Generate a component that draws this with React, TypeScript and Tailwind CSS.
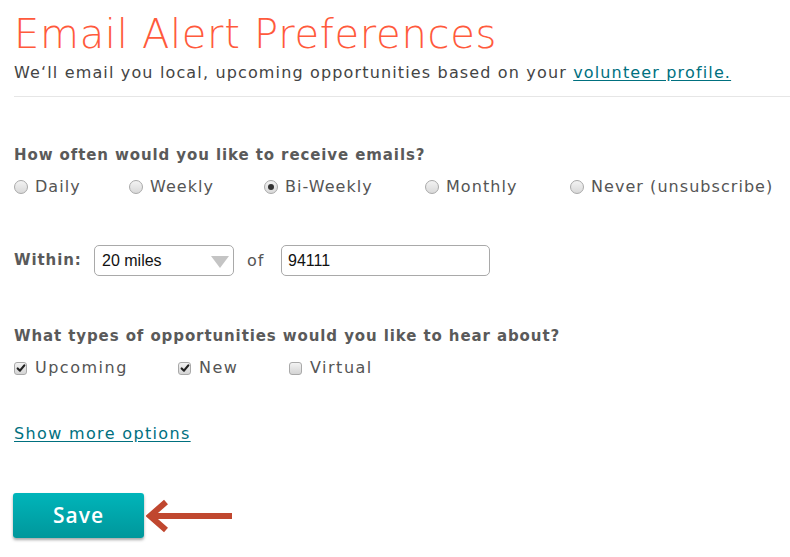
import React from "react";

const font = { fontFamily: '"DejaVu Sans", "Noto Sans", sans-serif' };
const arial = { fontFamily: '"Liberation Sans", Arial, sans-serif' };

function Radio({ checked }: { checked?: boolean }) {
  return (
    <span className="relative inline-flex h-[14px] w-[14px] shrink-0 items-center justify-center rounded-full border border-[#a9a9a9] bg-gradient-to-b from-[#f3f3f3] to-[#d9d9d9]">
      {checked && <span className="h-[6px] w-[6px] rounded-full bg-[#333]" />}
    </span>
  );
}

function Check({ checked }: { checked?: boolean }) {
  return (
    <span className="relative inline-flex h-[13px] w-[13px] shrink-0 items-center justify-center rounded-[3px] border border-[#a9a9a9] bg-gradient-to-b from-[#f3f3f3] to-[#d4d4d4]">
      {checked && (
        <svg viewBox="0 0 12 12" className="h-[10px] w-[10px]">
          <path d="M2 6.5 L4.8 9.2 L10 2.8" fill="none" stroke="#222" strokeWidth="2.6" strokeLinecap="round" strokeLinejoin="round" />
        </svg>
      )}
    </span>
  );
}

export default function App() {
  const freqs = [
    { label: "Daily", w: "w-[115px]" },
    { label: "Weekly", w: "w-[135px]" },
    { label: "Bi-Weekly", w: "w-[161px]", checked: true },
    { label: "Monthly", w: "w-[145px]" },
    { label: "Never (unsubscribe)", w: "" },
  ];
  const types = [
    { label: "Upcoming", w: "w-[164px]", checked: true },
    { label: "New", w: "w-[111px]", checked: true },
    { label: "Virtual", w: "" },
  ];

  return (
    <div className="min-h-[557px] w-[790px] bg-white pl-[14px] text-[#555]" style={font}>
      <h1 className="pt-[10px] text-[40px] font-extralight leading-[48px] tracking-[0.7px] text-[#ff5a3c]">
        Email Alert Preferences
      </h1>
      <p className="mt-[5px] text-[16px] leading-[20px] tracking-[1.15px] text-[#444]">
        We‘ll email you local, upcoming opportunities based on your{" "}
        <a href="#" className="text-[#00707f] underline underline-offset-2">
          volunteer profile.
        </a>
      </p>
      <div className="mt-[13px] h-px bg-[#e6e6e6]" />

      <p className="mt-[48px] text-[15px] font-bold leading-[20px] tracking-[0.9px] text-[#5a5a5a]">
        How often would you like to receive emails?
      </p>
      <div className="mt-[12px] flex items-center text-[16px] leading-[20px] tracking-[1.05px]">
        {freqs.map((f) => (
          <label key={f.label} className={`flex items-center gap-[7px] ${f.w}`}>
            <Radio checked={f.checked} />
            <span>{f.label}</span>
          </label>
        ))}
      </div>

      <div className="mt-[48px] flex items-center">
        <span className="w-[80px] text-[15px] font-bold tracking-[0.9px] text-[#5a5a5a]">Within:</span>
        <div className="relative flex h-[31px] w-[140px] items-center rounded-[5px] border border-[#a9a9a9] bg-white pl-[7px] text-[16px] text-[#111]" style={arial}>
          20 miles
          <span className="absolute right-[4px] top-[10px] h-0 w-0 border-x-[9px] border-t-[12px] border-x-transparent border-t-[#c4c4c4]" />
        </div>
        <span className="ml-[13px] w-[34px] text-[16px] tracking-[1px]">of</span>
        <div className="flex h-[31px] w-[209px] items-center rounded-[5px] border border-[#a9a9a9] bg-white pl-[6px] text-[16px] text-[#111]" style={arial}>
          94111
        </div>
      </div>

      <p className="mt-[50px] text-[15px] font-bold leading-[20px] tracking-[0.9px] text-[#5a5a5a]">
        What types of opportunities would you like to hear about?
      </p>
      <div className="mt-[12px] flex items-center text-[16px] leading-[20px] tracking-[1.5px]">
        {types.map((t) => (
          <label key={t.label} className={`flex items-center gap-[8px] ${t.w}`}>
            <Check checked={t.checked} />
            <span>{t.label}</span>
          </label>
        ))}
      </div>

      <a href="#" className="mt-[46px] inline-block text-[16px] leading-[20px] tracking-[1.35px] text-[#00707f] underline underline-offset-2">
        Show more options
      </a>

      <div className="mt-[47px] flex items-center">
        <button className="-ml-px h-[45px] w-[131px] rounded-[3px] bg-gradient-to-b from-[#00b5ba] to-[#00979b] text-[21px] font-semibold tracking-[1px] text-white shadow-[0_2px_3px_rgba(0,0,0,0.35)]" style={{ fontFamily: '"Open Sans", sans-serif' }}>
          Save
        </button>
        <svg width="88" height="36" viewBox="0 0 88 36" className="ml-[2px]">
          <path d="M4 18 H86" stroke="#c0472f" strokeWidth="6" />
          <path d="M20 4 L4 18 L20 32" fill="none" stroke="#c0472f" strokeWidth="6" strokeLinejoin="miter" />
        </svg>
      </div>
    </div>
  );
}
